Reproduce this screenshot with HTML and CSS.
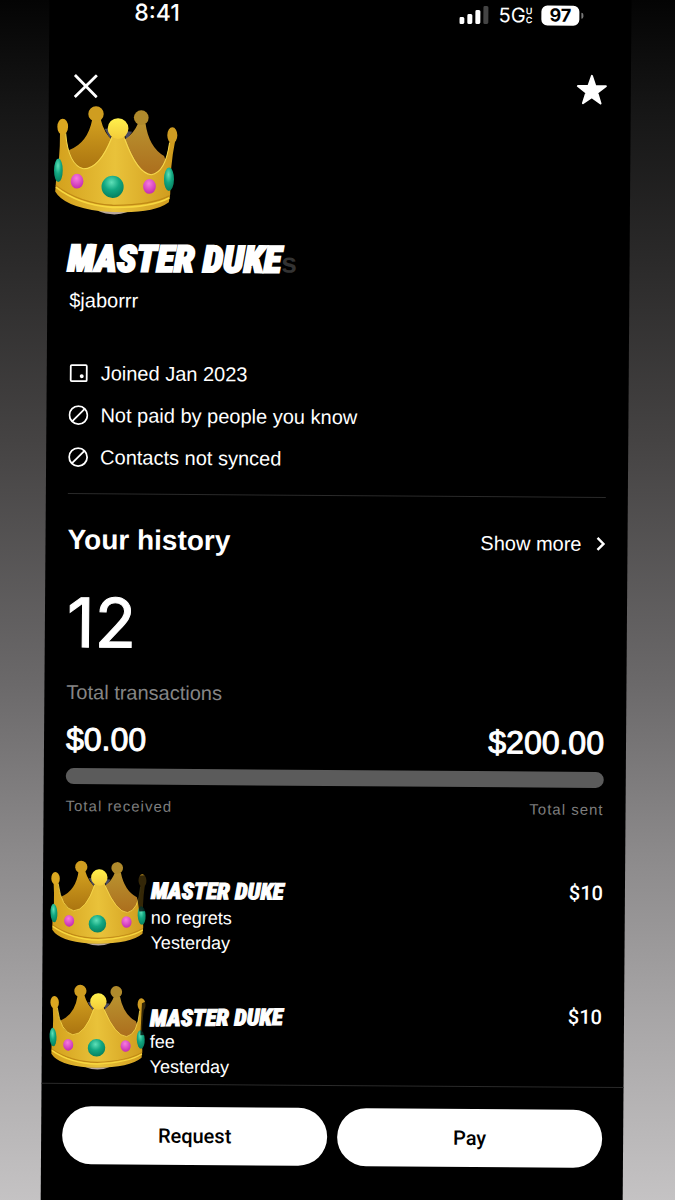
FILE: index.html
```html
<!DOCTYPE html>
<html lang="en">
<head>
    <meta charset="UTF-8">
    <meta name="viewport" content="width=device-width, initial-scale=1.0">
    <title>Profile</title>
    <link rel="stylesheet" href="styles.css">
</head>
<body>

    <!-- shared crown artwork -->
    <svg class="defs" width="0" height="0" aria-hidden="true">
        <defs>
            <linearGradient id="gold" x1="0" y1="0" x2="1" y2="0">
                <stop offset="0" stop-color="#d3a01c"/>
                <stop offset="0.5" stop-color="#e9c23a"/>
                <stop offset="1" stop-color="#cf9a1c"/>
            </linearGradient>
            <linearGradient id="ball" x1="0" y1="0" x2="0" y2="1">
                <stop offset="0" stop-color="#fff04c"/>
                <stop offset="1" stop-color="#f3cb3a"/>
            </linearGradient>
            <linearGradient id="backLeft" x1="0" y1="0" x2="0" y2="1">
                <stop offset="0" stop-color="#d2a01f"/>
                <stop offset="1" stop-color="#a9720f"/>
            </linearGradient>
            <linearGradient id="backRight" x1="0" y1="0" x2="0" y2="1">
                <stop offset="0" stop-color="#b9922f"/>
                <stop offset="1" stop-color="#ab6c1c"/>
            </linearGradient>
            <radialGradient id="emerald" cx="0.45" cy="0.3" r="0.7">
                <stop offset="0" stop-color="#5fe0b8"/>
                <stop offset="0.5" stop-color="#12a781"/>
                <stop offset="1" stop-color="#07805f"/>
            </radialGradient>
            <radialGradient id="pink" cx="0.45" cy="0.3" r="0.7">
                <stop offset="0" stop-color="#f77be0"/>
                <stop offset="1" stop-color="#c42bb0"/>
            </radialGradient>
        </defs>
        <symbol id="crown" viewBox="28 22 372 328">
            <path d="M180 92 L200 92 L198 126 Z M240 98 L262 100 L244 128 Z" fill="#4a4a60"/>
            <path d="M160 336 Q205 356 250 340 Z" fill="#b8a8a0"/>
            <path d="M143 64 Q130 135 75 156 L68 170 L115 220 L190 205 L206 130 Q178 105 168 64 Z" fill="url(#backLeft)"/>
            <circle cx="154" cy="48" r="23" fill="#cf9d20"/>
            <path d="M279 76 Q268 104 240 124 L270 220 L322 236 L368 200 L358 172 Q312 145 302 76 Z" fill="url(#backRight)"/>
            <circle cx="289" cy="58" r="22" fill="#b08a2c"/>
            <path d="M47 106 Q48 180 36 250 L34 280 Q60 325 170 338 Q320 350 373 310 L377 285 Q376 200 390 130 L374 130 Q362 222 320 228 Q278 224 238 112 L202 112 Q165 212 118 212 Q72 200 64 106 Z" fill="url(#gold)"/>
            <path d="M64 106 Q72 200 118 212 Q165 212 202 118 M374 132 Q362 222 320 228 Q278 224 240 122" fill="none" stroke="#f6d94f" stroke-width="3"/>
            <circle cx="220" cy="91" r="31" fill="url(#ball)"/>
            <ellipse cx="55" cy="87" rx="16" ry="24" fill="#dba720"/>
            <ellipse cx="382" cy="110" rx="15" ry="24" fill="#cf9c22"/>
            <path d="M36 262 Q105 314 205 320 Q320 320 376 290" fill="none" stroke="#c08a16" stroke-width="4"/>
            <path d="M36 267 Q105 320 205 326 Q320 326 375 296" fill="none" stroke="#f8d83f" stroke-width="5"/>
            <ellipse cx="43" cy="217" rx="13" ry="35" fill="url(#emerald)"/>
            <ellipse cx="373" cy="241" rx="15" ry="35" fill="url(#emerald)"/>
            <circle cx="205" cy="265" r="33" fill="url(#emerald)"/>
            <ellipse cx="99" cy="249" rx="19" ry="22" fill="url(#pink)"/>
            <ellipse cx="315" cy="263" rx="19" ry="22" fill="url(#pink)"/>
        </symbol>
        <symbol id="blocked" viewBox="0 0 20 20">
            <circle cx="10" cy="10" r="9" fill="none" stroke="#fff" stroke-width="1.8"/>
            <path d="M4 16 L16 4" stroke="#fff" stroke-width="1.8"/>
        </symbol>
    </svg>

    <main class="phone">
        <div class="status-bar">
            <span class="clock">8:41</span>
            <div class="status-right">
                <svg class="signal" viewBox="0 0 30 20" aria-hidden="true">
                    <rect x="0" y="12" width="5" height="7" rx="1.5" fill="#fff"/>
                    <rect x="8" y="9" width="5" height="10" rx="1.5" fill="#fff"/>
                    <rect x="16" y="5" width="5" height="14" rx="1.5" fill="#fff"/>
                    <rect x="24" y="1" width="5" height="18" rx="1.5" fill="#444"/>
                </svg>
                <span class="network">5G<span class="network-sub"><span>U</span><span>C</span></span></span>
                <span class="battery">97</span>
            </div>
        </div>

        <div class="top-bar">
            <button class="icon-button" aria-label="Close">
                <svg class="close-icon" viewBox="0 0 24 24"><path d="M1 1 L23 23 M23 1 L1 23" stroke="#fff" stroke-width="2.8"/></svg>
            </button>
            <button class="icon-button" aria-label="Favorite">
                <svg class="star-icon" viewBox="0 0 32 32"><path d="M16 2 L19.4 12 L30 12.3 L21.5 18.8 L24.8 29.5 L16 23.4 L7.2 29.5 L10.5 18.8 L2 12.3 L12.6 12 Z" fill="#fff" stroke="#fff" stroke-width="2" stroke-linejoin="round"/></svg>
            </button>
        </div>

        <svg class="crown-large" aria-hidden="true"><use href="#crown"/></svg>

        <header class="profile">
            <h1 class="display-name">MASTER DUKE<span class="ghost" aria-hidden="true">s</span></h1>
            <p class="handle">$jaborrr</p>
        </header>

        <ul class="facts">
            <li>
                <svg class="fact-icon" viewBox="0 0 20 20" aria-hidden="true">
                    <rect x="2" y="2" width="16" height="16" rx="1" fill="none" stroke="#fff" stroke-width="1.8"/>
                    <circle cx="13" cy="13" r="2" fill="#fff"/>
                </svg>
                Joined Jan 2023
            </li>
            <li><svg class="fact-icon" aria-hidden="true"><use href="#blocked"/></svg>Not paid by people you know</li>
            <li><svg class="fact-icon" aria-hidden="true"><use href="#blocked"/></svg>Contacts not synced</li>
        </ul>

        <section class="history">
            <div class="history-header">
                <h2>Your history</h2>
                <a class="show-more" href="#">Show more
                    <svg class="chevron" viewBox="0 0 10 16" aria-hidden="true"><path d="M2 2 L8 8 L2 14" fill="none" stroke="#fff" stroke-width="2.4"/></svg>
                </a>
            </div>
            <p class="count">12</p>
            <p class="count-label">Total transactions</p>
            <div class="split amounts"><span>$0.00</span><span>$200.00</span></div>
            <div class="bar"></div>
            <div class="split labels"><span>Total received</span><span>Total sent</span></div>
        </section>

        <ul class="transactions">
            <li>
                <svg class="crown-small" viewBox="0 0 100 87" aria-hidden="true">
                    <use href="#crown" width="100" height="87"/>
                    <path d="M86 18 H100 V54 H90 Z" fill="#000" fill-opacity="0.75"/>
                </svg>
                <div class="details">
                    <span class="sender">MASTER DUKE</span>
                    <span>no regrets</span>
                    <span>Yesterday</span>
                </div>
                <span class="price">$10</span>
            </li>
            <li>
                <svg class="crown-small" viewBox="0 0 100 87" aria-hidden="true">
                    <use href="#crown" width="100" height="87"/>
                    <path d="M95 22 L100 20 V54 H92 Z" fill="#000" fill-opacity="0.75"/>
                </svg>
                <div class="details">
                    <span class="sender tilted">MASTER DUKE</span>
                    <span>fee</span>
                    <span>Yesterday</span>
                </div>
                <span class="price">$10</span>
            </li>
        </ul>

        <footer class="actions">
            <button class="pill">Request</button>
            <button class="pill">Pay</button>
        </footer>
    </main>

</body>
</html>
```
FILE: styles.css
```css
* {
    box-sizing: border-box;
}
html {
    background: #000;
}
body {
    margin: 0;
    min-height: 100vh;
    overflow: hidden;
    font-family: "Liberation Sans", Arial, sans-serif;
    font-size: 20px;
    line-height: 24px;
    color: #fff;
    background: linear-gradient(#040404 0%, #161616 9%, #2c2b2b 22%, #454343 36%, #6b696a 56%, #8c8a8b 70%, #a9a7a8 84%, #c8c6c7 100%);
}
h1, h2, p, ul {
    margin: 0;
    padding: 0;
}
ul {
    list-style: none;
}
button {
    font: inherit;
    border: none;
    cursor: pointer;
}
.defs {
    position: absolute;
}
.phone {
    display: flex;
    flex-direction: column;
    margin: -8px 48px -8px 45px;
    padding: 8px 0 40px;
    background: #000;
    transform: rotate(0.42deg);
}
.status-bar {
    display: flex;
    justify-content: space-between;
    align-items: center;
    height: 28px;
    padding: 0 52px 0 85px;
    font-family: Inter, sans-serif;
}
.clock {
    font-size: 23px;
    font-weight: 500;
    line-height: 20px;
}
.status-right {
    display: flex;
    align-items: center;
    gap: 9px;
}
.signal {
    width: 30px;
    height: 20px;
}
.network {
    display: flex;
    align-items: center;
    font-size: 20px;
}
.network-sub {
    display: flex;
    flex-direction: column;
    font-size: 9px;
    font-weight: 600;
    line-height: 9px;
}
.battery {
    position: relative;
    width: 38px;
    height: 20px;
    border-radius: 6px;
    background: #fff;
    color: #000;
    font-size: 18px;
    font-weight: 700;
    line-height: 20px;
    text-align: center;
}
.battery::after {
    content: "";
    position: absolute;
    right: -4px;
    top: 7px;
    width: 2px;
    height: 6px;
    border-radius: 0 2px 2px 0;
    background: #777;
}
.top-bar {
    display: flex;
    justify-content: space-between;
    align-items: center;
    margin-top: 44px;
    padding: 0 23px 0 25px;
}
.icon-button {
    display: flex;
    padding: 0;
    background: transparent;
}
.close-icon {
    width: 24px;
    height: 24px;
}
.star-icon {
    width: 32px;
    height: 32px;
}
.crown-large {
    width: 125px;
    height: 110px;
    margin: 3px 0 0 5px;
}
.profile {
    margin-top: 24px;
    padding: 0 20px;
}
.display-name {
    font-family: "Roboto Condensed", "Open Sans Condensed", Roboto, sans-serif;
    font-size: 37px;
    font-weight: 900;
    font-style: italic;
    line-height: 40px;
    -webkit-text-stroke: 2px #fff;
}
.ghost {
    font-family: "Liberation Sans", Arial, sans-serif;
    font-size: 28px;
    font-style: normal;
    color: #333;
    -webkit-text-stroke: 0;
}
.handle {
    margin-top: 6px;
    padding-left: 2px;
}
.facts {
    margin: 40px 22px 0;
    padding-bottom: 15px;
    border-bottom: 1px solid #2a2a2a;
}
.facts li {
    display: flex;
    align-items: center;
    gap: 12px;
    height: 42px;
}
.fact-icon {
    width: 20px;
    height: 20px;
}
.history {
    padding: 28px 22px 0;
}
.history-header {
    display: flex;
    justify-content: space-between;
    align-items: center;
}
.history-header h2 {
    font-size: 28px;
    line-height: 36px;
}
.show-more {
    display: flex;
    align-items: center;
    gap: 14px;
    color: #fff;
    text-decoration: none;
}
.chevron {
    width: 10px;
    height: 16px;
}
.count {
    margin-top: 28px;
    font-family: Inter, sans-serif;
    font-size: 68px;
    line-height: 72px;
    -webkit-text-stroke: 1px #fff;
}
.count-label {
    margin-top: 22px;
    color: #858585;
}
.split {
    display: flex;
    justify-content: space-between;
}
.amounts {
    margin-top: 17px;
    font-size: 32px;
    line-height: 36px;
    -webkit-text-stroke: 1px #fff;
}
.bar {
    height: 16px;
    margin-top: 11px;
    border-radius: 8px;
    background: #5b5b5b;
}
.labels {
    margin-top: 13px;
    font-size: 15px;
    line-height: 18px;
    letter-spacing: 1px;
    color: #7d7d7d;
}
.transactions {
    display: flex;
    flex-direction: column;
    gap: 28px;
    margin-top: 44px;
    padding: 0 22px 0 6px;
}
.transactions li {
    display: flex;
    align-items: flex-start;
    gap: 2px;
}
.crown-small {
    width: 100px;
    height: 87px;
    transform: rotate(-3deg);
}
.details {
    display: flex;
    flex: 1;
    flex-direction: column;
    padding-top: 18px;
    font-size: 18px;
    line-height: 25px;
}
.sender {
    font-family: "Roboto Condensed", "Open Sans Condensed", Roboto, sans-serif;
    font-size: 23px;
    font-weight: 900;
    font-style: italic;
    line-height: 28px;
    -webkit-text-stroke: 1px #fff;
}
.tilted {
    transform: rotate(-1deg);
}
.price {
    padding-top: 18px;
    font-family: Roboto, sans-serif;
    font-weight: 500;
}
.actions {
    display: flex;
    gap: 10px;
    margin-top: 4px;
    padding: 22px 21px 24px;
    border-top: 1px solid #2a2a2a;
}
.pill {
    flex: 1;
    height: 58px;
    border-radius: 29px;
    background: #fff;
    color: #000;
    font-family: Roboto, sans-serif;
    font-weight: 500;
}
```
